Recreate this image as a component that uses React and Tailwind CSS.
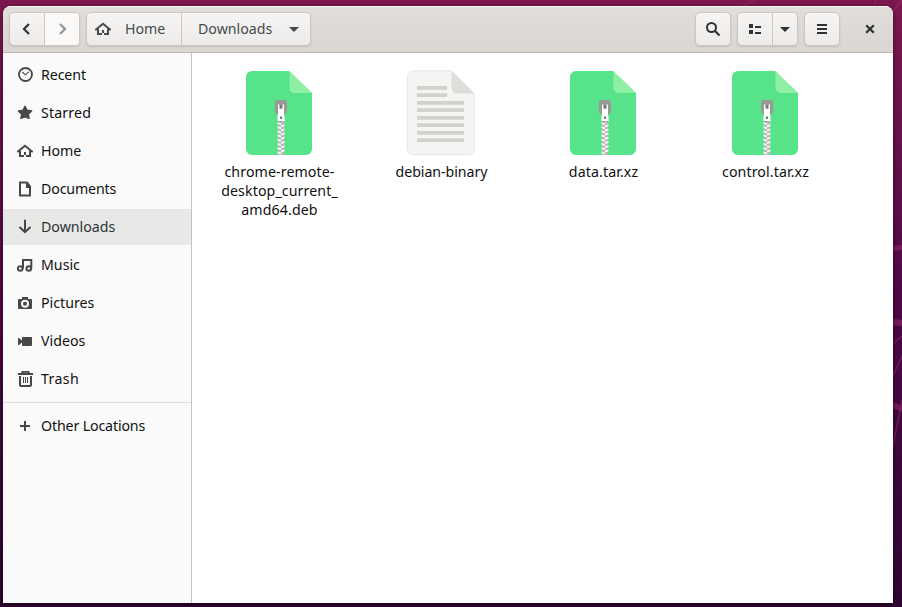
import React from 'react';

function Icon({ children, className = '' }) {
  return (
    <svg viewBox="0 0 16 16" className={`h-4 w-4 shrink-0 ${className}`} fill="currentColor">
      {children}
    </svg>
  );
}

const HomeGlyph = () => (
  <>
    <path d="M1 8.5 8 2.700l7 5.800" fill="none" stroke="currentColor" strokeWidth="2" strokeLinecap="round" />
    <path d="M2 8h2v4h3v-3h2v3h3V8h2v6H9v-2H7v2H2z" />
  </>
);

const places = [
  {
    name: 'Recent',
    tracking: '-tracking-[0.1px]',
    icon: (
      <>
        <circle cx="8.5" cy="7.5" r="6.5" fill="none" stroke="currentColor" strokeWidth="1.8" />
        <path d="m5.300 5 3.100 2.800 3.400-3" fill="none" stroke="currentColor" strokeWidth="1.1" />
      </>
    ),
  },
  {
    name: 'Starred',
    tracking: 'tracking-[0.15px]',
    icon: (
      <path
        d="m8 1.300 2 4 4.600.6-3.400 3.200.9 4.300L8 11.700l-4.100 1.700.9-4.300-3.400-3.200L6 5.300z"
        stroke="currentColor"
        strokeWidth="1.5"
        strokeLinejoin="round"
      />
    ),
  },
  { name: 'Home', icon: <HomeGlyph /> },
  {
    name: 'Documents',
    tracking: '-tracking-[0.15px]',
    icon: <path d="M3 .5h7.500L14 5v10.500H3a1 1 0 0 1-1-1v-13a1 1 0 0 1 1-1zm1 2v11h8V7H9V2.500z" />,
  },
  {
    name: 'Downloads',
    icon: (
      <path
        d="M8 1.500v11M3 8.500l5 4.600 5-4.600"
        fill="none"
        stroke="currentColor"
        strokeWidth="2"
        strokeLinecap="round"
      />
    ),
  },
  {
    name: 'Music',
    icon: (
      <g fill="none" stroke="currentColor" strokeWidth="2">
        <circle cx="3.200" cy="11.500" r="2.300" />
        <circle cx="11.800" cy="11.500" r="2.300" />
        <path d="M6 11.500V3h8.300v8.500" />
      </g>
    ),
  },
  {
    name: 'Pictures',
    icon: (
      <path
        fillRule="evenodd"
        d="M5 2h6v2h3a1 1 0 0 1 1 1v8a1 1 0 0 1-1 1H2a1 1 0 0 1-1-1V5a1 1 0 0 1 1-1h3zm3 2.800a4 4 0 1 0 0 8 4 4 0 0 0 0-8zm0 2a2 2 0 1 1 0 4 2 2 0 0 1 0-4z"
      />
    ),
  },
  {
    name: 'Videos',
    icon: <path d="M6 4h8a1 1 0 0 1 1 1v7a1 1 0 0 1-1 1H6a1 1 0 0 1-1-1V9.500L1.800 12H1V5h.8L5 7.500V5a1 1 0 0 1 1-1z" />,
  },
  {
    name: 'Trash',
    tracking: 'tracking-[0.35px]',
    icon: (
      <g fill="none" stroke="currentColor">
        <path d="M1 3h15M4.500 3 5.500.9h6l1 2.100" strokeWidth="1.800" />
        <path d="M3 5v9a1 1 0 0 0 1 1h9a1 1 0 0 0 1-1V5" strokeWidth="2" />
        <path d="M6.500 6v6M8.500 6v6M10.500 6v6" />
      </g>
    ),
  },
];

function Place({ name, icon, active, tracking = '' }) {
  return (
    <li
      className={`flex h-9 items-center gap-2 pl-3.5 ${
        active ? 'bg-[#e8e8e6] text-[#2e3436]' : 'text-[#111111]'
      }`}
    >
      <Icon className="text-[#484848]">{icon}</Icon>
      <span className={`pb-0.5 ${tracking}`}>{name}</span>
    </li>
  );
}

function ArchiveIcon() {
  const teeth = Array.from({ length: 8 }, (_, i) => i);
  return (
    <svg width="68" height="86" viewBox="0 0 68 86" className="shrink-0">
      <path d="M7 1h37l23 22v56a6 6 0 0 1-6 6H7a6 6 0 0 1-6-6V7a6 6 0 0 1 6-6z" fill="#57e389" />
      <path d="M44.500 1 67 23H50a5.500 5.500 0 0 1-5.500-5.500z" fill="#8ff0a4" />
      <rect x="33" y="50" width="6" height="35" fill="#b9b8b4" />
      {teeth.map((i) => (
        <g key={i} fill="#f6f5f4">
          <path d={`M32.500 ${52 + i * 4.2}l3.500 1v2l-3.500-1z`} />
          <path d={`M36 ${51 + i * 4.2}l3.500 -1v2l-3.500 1z`} />
        </g>
      ))}
      <path d="M33 30h6a3 3 0 0 1 3 3v9l-3 3h-6l-3-3v-9a3 3 0 0 1 3-3z" fill="#9a9996" />
      <path d="M33 34.500h1.500V39h3v-4.500H39V45l.5 1v4a1.500 1.500 0 0 1-1.500 1.500h-4a1.500 1.500 0 0 1-1.500-1.500v-4l.5-1z" fill="#fff" />
      <path d="M34.700 35h2.600v2.500h-2.600zM35 46.500h2v2.500h-2z" fill="#77767b" />
      <path d="M33 51.800h6" stroke="#87868a" />
    </svg>
  );
}

function DocumentIcon() {
  return (
    <svg width="70" height="86" viewBox="0 0 70 86" className="shrink-0">
      <path
        d="M7.500.7h38L68.300 23.500v55.300a6 6 0 0 1-6 6H7.500a6 6 0 0 1-6-6V6.700a6 6 0 0 1 6-6z"
        fill="#f5f4f3"
        stroke="#e8e7e5"
      />
      <path d="M45.500 1 68 23.500H51a5.500 5.500 0 0 1-5.500-5.500z" fill="#deddda" />
      <g fill="#d2d1ce">
        <path d="M11 16h30v3.700H11zM11 23.300h30v3.700H11z" />
        <path d="M11 31h47v3.700H11zM11 38.300h47v3.700H11zM11 46h47v3.700H11zM11 53.300h47v3.700H11zM11 61h47v3.700H11zM11 68.300h47v3.700H11z" />
      </g>
    </svg>
  );
}

const files = [
  { lines: ['chrome-remote-', 'desktop_current_', 'amd64.deb'], archive: true, tracking: 'tracking-[0.1px]' },
  { lines: ['debian-binary'], archive: false, tracking: '-tracking-[0.05px]' },
  { lines: ['data.tar.xz'], archive: true, tracking: 'tracking-[0.1px]' },
  { lines: ['control.tar.xz'], archive: true, tracking: 'tracking-[0.1px]' },
];

const group =
  'flex h-[34px] overflow-hidden rounded-[5px] border border-[#cdc7c2] bg-linear-to-b from-[#f6f5f4] to-[#edebe9] shadow-[0_1px_2px_rgba(0,0,0,0.12)]';
const cell = 'flex items-center justify-center';

export default function App() {
  return (
    <div className="relative h-[607px] w-[902px] overflow-hidden bg-linear-to-b from-[#7d184d] via-[#4d0848] to-[#300532] pt-1.5 pl-[3px] font-['Noto_Sans',sans-serif] text-[14.2px] leading-[19px]">
      <svg className="absolute inset-0 h-full w-full" viewBox="0 0 902 607" fill="none" stroke="#8c2466" strokeOpacity=".65">
        <path d="m740 7 15-7M874 7l2-7" strokeWidth="2" />
        <path d="m892 13 10-13" strokeWidth="3" />
        <path d="m893 249 9-2" strokeWidth="5" />
        <path d="m893 322 9 1M893 405l9 4" strokeWidth="6" />
        <path d="m893 344 9-8M893 376l9-20M893 446l9-46" strokeWidth="1.500" />
      </svg>
      <main className="relative flex h-[597px] w-[890px] flex-col overflow-hidden rounded-t-lg bg-white shadow-[0_1px_5px_rgba(0,0,0,0.55)]">
        <header className="flex h-[47px] shrink-0 items-start border-b border-[#bfb8b1] bg-linear-to-b from-[#e1dedb] to-[#dad6d2] pt-1.5 pl-1.5 text-[#2e3436] shadow-[inset_0_1px_0_#f9f8f8]">
          <div className={`${group} w-[71px]`}>
            <button className={`${cell} w-[35px] border-r border-[#cdc7c2]`}>
              <Icon><path d="m10 3-5 5 5 5" fill="none" stroke="currentColor" strokeWidth="2.200" /></Icon>
            </button>
            <button className={`${cell} flex-1 bg-[#faf9f8] text-[#929595]`}>
              <Icon><path d="m6 3 5 5-5 5" fill="none" stroke="currentColor" strokeWidth="2.200" /></Icon>
            </button>
          </div>
          <div className={`${group} ml-1.5 w-[225px]`}>
            <button className="flex w-[95px] items-center border-r border-[#cdc7c2] pl-2 text-[#454b4c]">
              <Icon><HomeGlyph /></Icon>
              <span className="ml-3.5 pb-0.5">Home</span>
            </button>
            <button className="flex flex-1 items-center pl-4 text-[#454b4c]">
              <span className="w-[74px] pb-0.5">Downloads</span>
              <Icon className="ml-3.5"><path d="M3 6h10l-5 5z" /></Icon>
            </button>
          </div>
          <div className={`${group} ml-auto w-9`}>
            <button className={`${cell} w-full`}>
              <Icon>
                <circle cx="6.500" cy="6.500" r="4.500" fill="none" stroke="currentColor" strokeWidth="2" />
                <path d="m10 10 4.500 4.500" stroke="currentColor" strokeWidth="2.300" />
              </Icon>
            </button>
          </div>
          <div className={`${group} ml-1.5 w-[61px]`}>
            <button className={`${cell} w-[35px] border-r border-[#cdc7c2]`}>
              <Icon><path d="M2 3h4v4H2zM2 9h4v4H2zM8 5h6v2H8zM8 11h6v2H8z" /></Icon>
            </button>
            <button className={`${cell} flex-1`}>
              <Icon><path d="M3 6h10l-5 5z" /></Icon>
            </button>
          </div>
          <div className={`${group} ml-1.5 w-9`}>
            <button className={`${cell} w-full`}>
              <Icon><path d="M3 3h10v2H3zM3 7h10v2H3zM3 11h10v2H3z" /></Icon>
            </button>
          </div>
          <button className={`${cell} mr-[5px] ml-3 h-[34px] w-[36px]`}>
            <Icon><path d="m4.200 4.200 7.600 7.600m0-7.600-7.600 7.600" stroke="currentColor" strokeWidth="2.300" /></Icon>
          </button>
        </header>
        <div className="flex min-h-0 flex-1">
          <aside className="w-[189px] shrink-0 border-r border-[#c6c4c0] bg-[#fafafa] pt-1">
            <ul className="flex flex-col gap-0.5">
              {places.map((p) => (
                <Place key={p.name} {...p} active={p.name === 'Downloads'} />
              ))}
            </ul>
            <ul className="mt-[5px] border-t border-[#dededc] pt-[5px]">
              <Place
                name="Other Locations"
                tracking="-tracking-[0.14px]"
                icon={<path d="M7 3h2v4h4v2H9v4H7V9H3V7h4z" />}
              />
            </ul>
          </aside>
          <section className="flex flex-1 items-start pt-[17px] pl-[6px] text-[#111111]">
            {files.map((f) => (
              <div key={f.lines[0]} className="flex w-[162px] flex-col items-center">
                {f.archive ? <ArchiveIcon /> : <DocumentIcon />}
                <p className={`mt-1.5 pl-px text-center ${f.tracking}`}>
                  {f.lines.map((line) => (
                    <span key={line} className="block">{line}</span>
                  ))}
                </p>
              </div>
            ))}
          </section>
        </div>
      </main>
    </div>
  );
}
